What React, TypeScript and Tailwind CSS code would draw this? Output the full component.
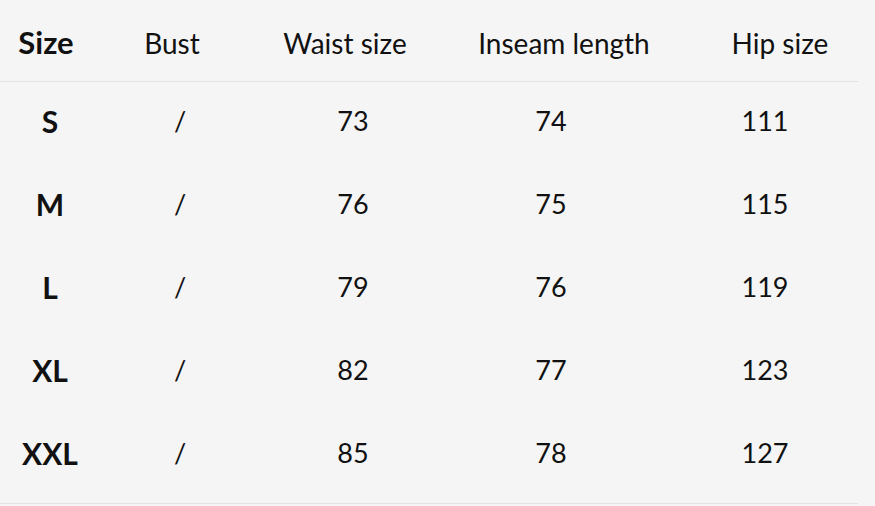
const rows = [
  { size: 'S', bust: '/', waist: '73', inseam: '74', hip: '111' },
  { size: 'M', bust: '/', waist: '76', inseam: '75', hip: '115' },
  { size: 'L', bust: '/', waist: '79', inseam: '76', hip: '119' },
  { size: 'XL', bust: '/', waist: '82', inseam: '77', hip: '123' },
  { size: 'XXL', bust: '/', waist: '85', inseam: '78', hip: '127' },
];

export default function App() {
  return (
    <div
      className="w-[875px] h-[506px] bg-[#f5f5f5] text-[#111] overflow-hidden"
      style={{ fontFamily: 'Lato, "Open Sans", sans-serif' }}
    >
      <div className="w-[858px] border-b border-[#e2e2e2]">
        <div className="grid grid-cols-[92px_160px_186px_252px_168px] h-[81px] pt-[4px] items-center text-[28px] text-center">
          <div className="font-bold text-[31px]">Size</div>
          <div>Bust</div>
          <div>Waist size</div>
          <div>Inseam length</div>
          <div className="pl-[12px]">Hip size</div>
        </div>
      </div>

      <div className="w-[858px] border-b border-[#e2e2e2] pb-[6px]">
        {rows.map((r) => (
          <div
            key={r.size}
            className="grid grid-cols-[100px_160px_186px_210px_202px] h-[83px] pb-[4px] items-center text-[27px] text-center"
          >
            <div className="font-bold text-[30px]">{r.size}</div>
            <div>{r.bust}</div>
            <div>{r.waist}</div>
            <div>{r.inseam}</div>
            <div className="pl-[16px]">{r.hip}</div>
          </div>
        ))}
      </div>
    </div>
  );
}
